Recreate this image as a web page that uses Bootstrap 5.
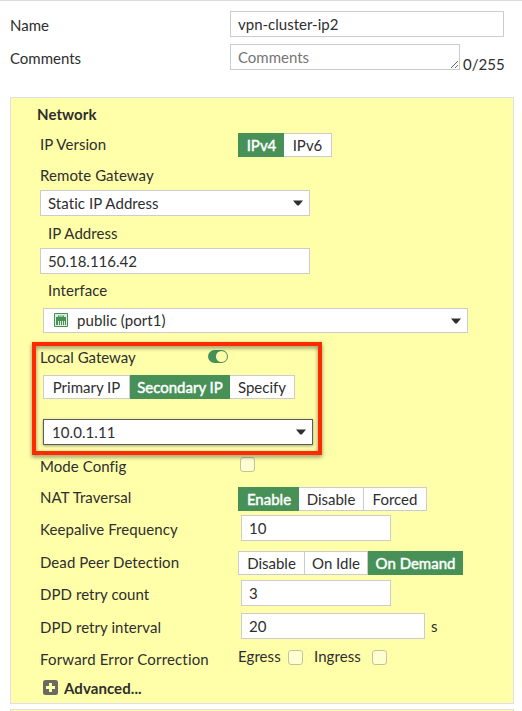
<!DOCTYPE html>
<html lang="en">
<head>
<meta charset="utf-8">
<title>VPN tunnel</title>
<link href="https://cdn.jsdelivr.net/npm/bootstrap@5.3.0/dist/css/bootstrap.min.css" rel="stylesheet">
<style>
body{font:15px/20px Lato,"Liberation Sans",sans-serif;color:#2e2e2e;width:522px;height:711px;overflow:hidden;border-top:1px solid #dadada}
.page-form{padding:10px 0 0 10px}
.top-line{height:33px}
.top-label{width:220px;padding-top:4px}
.vpn-input{display:block;height:26px;padding:0 7px;border:1px solid #cccccf;border-radius:0;font-size:15px;line-height:24px;color:#2e2e2e;background:#fff;flex:none}
.vpn-input::placeholder{color:#757575;opacity:1}
textarea.vpn-input{min-height:26px;overflow:hidden;resize:both}
.counter{padding:10px 0 0 3px}
.vpn-panel{background:#ffffaa;border:1px solid #e0e0e2;width:504px;height:607px;margin:20px 0 5px 10px;padding-left:29px;letter-spacing:.07px}
.next-panel{height:20px;margin-top:0}
.panel-title{margin:6px 0 0 -3px}
.line{display:flex;align-items:flex-start}
.h25{height:25px}.h28{height:28px}.h29{height:29px}.h31{height:31px}.h32{height:32px}.h33{height:33px}.h35{height:35px}.h36{height:36px}.h37{height:37px}.h39{height:39px}.h44{height:44px}
.key{width:198px;flex:none;white-space:nowrap}
.key-gateway{width:168px;letter-spacing:0}
.key-fec{letter-spacing:.17px}
.dn1{padding-top:1px}.dn3{padding-top:3px}.dn4{padding-top:4px}
.ml2{margin-left:2px}.ml3{margin-left:3px}.ml8{margin-left:8px}
.w150{width:150px}.w184{width:184px}.w230{width:230px}.w270{width:270px}.w274{width:274px}.w425{width:425px}
.picker{display:flex;justify-content:space-between;padding-right:6px}
.picker .arrow{width:10px;height:6px;margin:9px 0 0;flex:none}
.pick-short{height:25px;line-height:23px;padding-left:10px}
.pick-focus{border-color:#5c5c5c;box-shadow:0 1px 3px rgba(0,0,0,.35);padding-left:8px}
.port{width:14px;height:14px;margin:4px 9px 0 0}
.seg .btn{flex:none;height:24px;padding:0;border:1px solid #cccccf;border-radius:0;font-size:15px;line-height:22px;color:#2e2e2e;background:#fff;white-space:nowrap;border-left-width:0;margin:0!important}
.seg .btn:first-child{border-left-width:1px}
.seg .btn.active{background:#479158;border-color:#479158;color:#fff;-webkit-text-stroke:.45px #fff;padding-left:1px}
.b46{width:46px}.b48{width:48px}.b61{width:61px}.b63{width:63px}.b65{width:65px}.b67{width:67px}.b87{width:87px}.b95{width:95px}.b100{width:100px}
.tick.form-check-input{width:15px;height:15px;margin:0;border:1px solid #c4c49c;border-radius:3px;background:#ffffd2;flex:none}
.toggle{width:20px;height:13px}
.unit{margin-left:6px}
.egress{width:50px}
.ingress{width:58px;margin-left:11px}
.plus{width:15px;height:15px;margin:2px 6px 0 3px}
.callout{position:absolute;left:-8px;top:-5px;width:290px;height:113px;border:4px solid #ff2a00;filter:drop-shadow(0 2px 2px rgba(0,0,0,.45));pointer-events:none}
</style>
</head>
<body>
<form class="page-form">
  <div class="top-line d-flex"><label class="top-label">Name</label><input class="form-control vpn-input w274" value="vpn-cluster-ip2"></div>
  <div class="top-line d-flex"><label class="top-label">Comments</label><textarea class="form-control vpn-input w230" rows="1" placeholder="Comments"></textarea><span class="counter">0/255</span></div>
</form>
<section class="vpn-panel">
  <div class="line h35"><b class="panel-title">Network</b></div>
  <div class="line h32"><span class="key dn1">IP Version</span>
    <div class="btn-group seg"><button class="btn active b46">IPv4</button><button class="btn b48">IPv6</button></div></div>
  <div class="line h25">Remote Gateway</div>
  <div class="line h33"><div class="form-control vpn-input picker w270">Static IP Address<svg class="arrow" viewBox="0 0 10 6"><path d="M0 .5h10L6 5.2Q5 6 4 5.2z" fill="#2e2e2e"/></svg></div></div>
  <div class="line h25"><span class="ml8">IP Address</span></div>
  <div class="line h32"><input class="form-control vpn-input w270" value="50.18.116.42"></div>
  <div class="line h28"><span class="ml8">Interface</span></div>
  <div class="line h39"><div class="form-control vpn-input picker pick-short ml3 w425"><span class="d-flex"><svg class="port" viewBox="0 0 14 14"><path fill="#dcebdc" stroke="#479158" d="M.5.5h13v13H.5z"/><path fill="#479158" d="M2 4h2V2.5h1.5V4h1V2.5h1V4h1V2.5H10V4h2v8h-1V8h-1v4H9V8H8v4H7V8H6v4H5V8H4v4H2z"/></svg>public (port1)</span><svg class="arrow" viewBox="0 0 10 6"><path d="M0 .5h10L6 5.2Q5 6 4 5.2z" fill="#2e2e2e"/></svg></div></div>
  <div class="position-relative">
    <div class="line h28"><span class="key key-gateway">Local Gateway</span><span class="dn3 d-flex"><svg class="toggle" viewBox="0 0 20 13"><rect width="20" height="13" rx="6.5" fill="#479158"/><circle cx="13.5" cy="6.5" r="5.5" fill="#ffffaa"/></svg></span></div>
    <div class="line h44"><div class="btn-group seg ml3"><button class="btn b87">Primary IP</button><button class="btn active b100">Secondary IP</button><button class="btn b65">Specify</button></div></div>
    <div class="line h37"><div class="form-control vpn-input picker pick-focus ml3 w270">10.0.1.11<svg class="arrow" viewBox="0 0 10 6"><path d="M0 .5h10L6 5.2Q5 6 4 5.2z" fill="#2e2e2e"/></svg></div></div>
    <div class="callout"></div>
  </div>
  <div class="line h31"><span class="key">Mode Config</span><span class="dn1 d-flex ml2"><input type="checkbox" class="form-check-input tick"></span></div>
  <div class="line h28"><span class="key">NAT Traversal</span>
    <div class="btn-group seg"><button class="btn active b61">Enable</button><button class="btn b65">Disable</button><button class="btn b63">Forced</button></div></div>
  <div class="line h36"><span class="key dn4">Keepalive Frequency</span><input class="form-control vpn-input ml3 w150" value="10"></div>
  <div class="line h29"><span class="key dn1">Dead Peer Detection</span>
    <div class="btn-group seg"><button class="btn b67">Disable</button><button class="btn b63">On Idle</button><button class="btn active b95">On Demand</button></div></div>
  <div class="line h33"><span class="key dn4">DPD retry count</span><input class="form-control vpn-input ml3 w150" value="3"></div>
  <div class="line h33"><span class="key dn4">DPD retry interval</span><input class="form-control vpn-input ml3 w184" value="20"><span class="dn3 unit">s</span></div>
  <div class="line h32"><span class="key key-fec dn3">Forward Error Correction</span><span class="egress">Egress</span><span class="dn4 d-flex"><input type="checkbox" class="form-check-input tick"></span><span class="ingress">Ingress</span><span class="dn4 d-flex"><input type="checkbox" class="form-check-input tick"></span></div>
  <div class="line"><svg class="plus" viewBox="0 0 15 15"><rect width="15" height="15" rx="2.5" fill="#6a6a62"/><path d="M6 3h3v3h3v3H9v3H6V9H3V6h3z" fill="#ffffaa"/></svg><b>Advanced...</b></div>
</section>
<section class="vpn-panel next-panel"></section>
<script src="https://cdn.jsdelivr.net/npm/bootstrap@5.3.0/dist/js/bootstrap.bundle.min.js"></script>
</body>
</html>
